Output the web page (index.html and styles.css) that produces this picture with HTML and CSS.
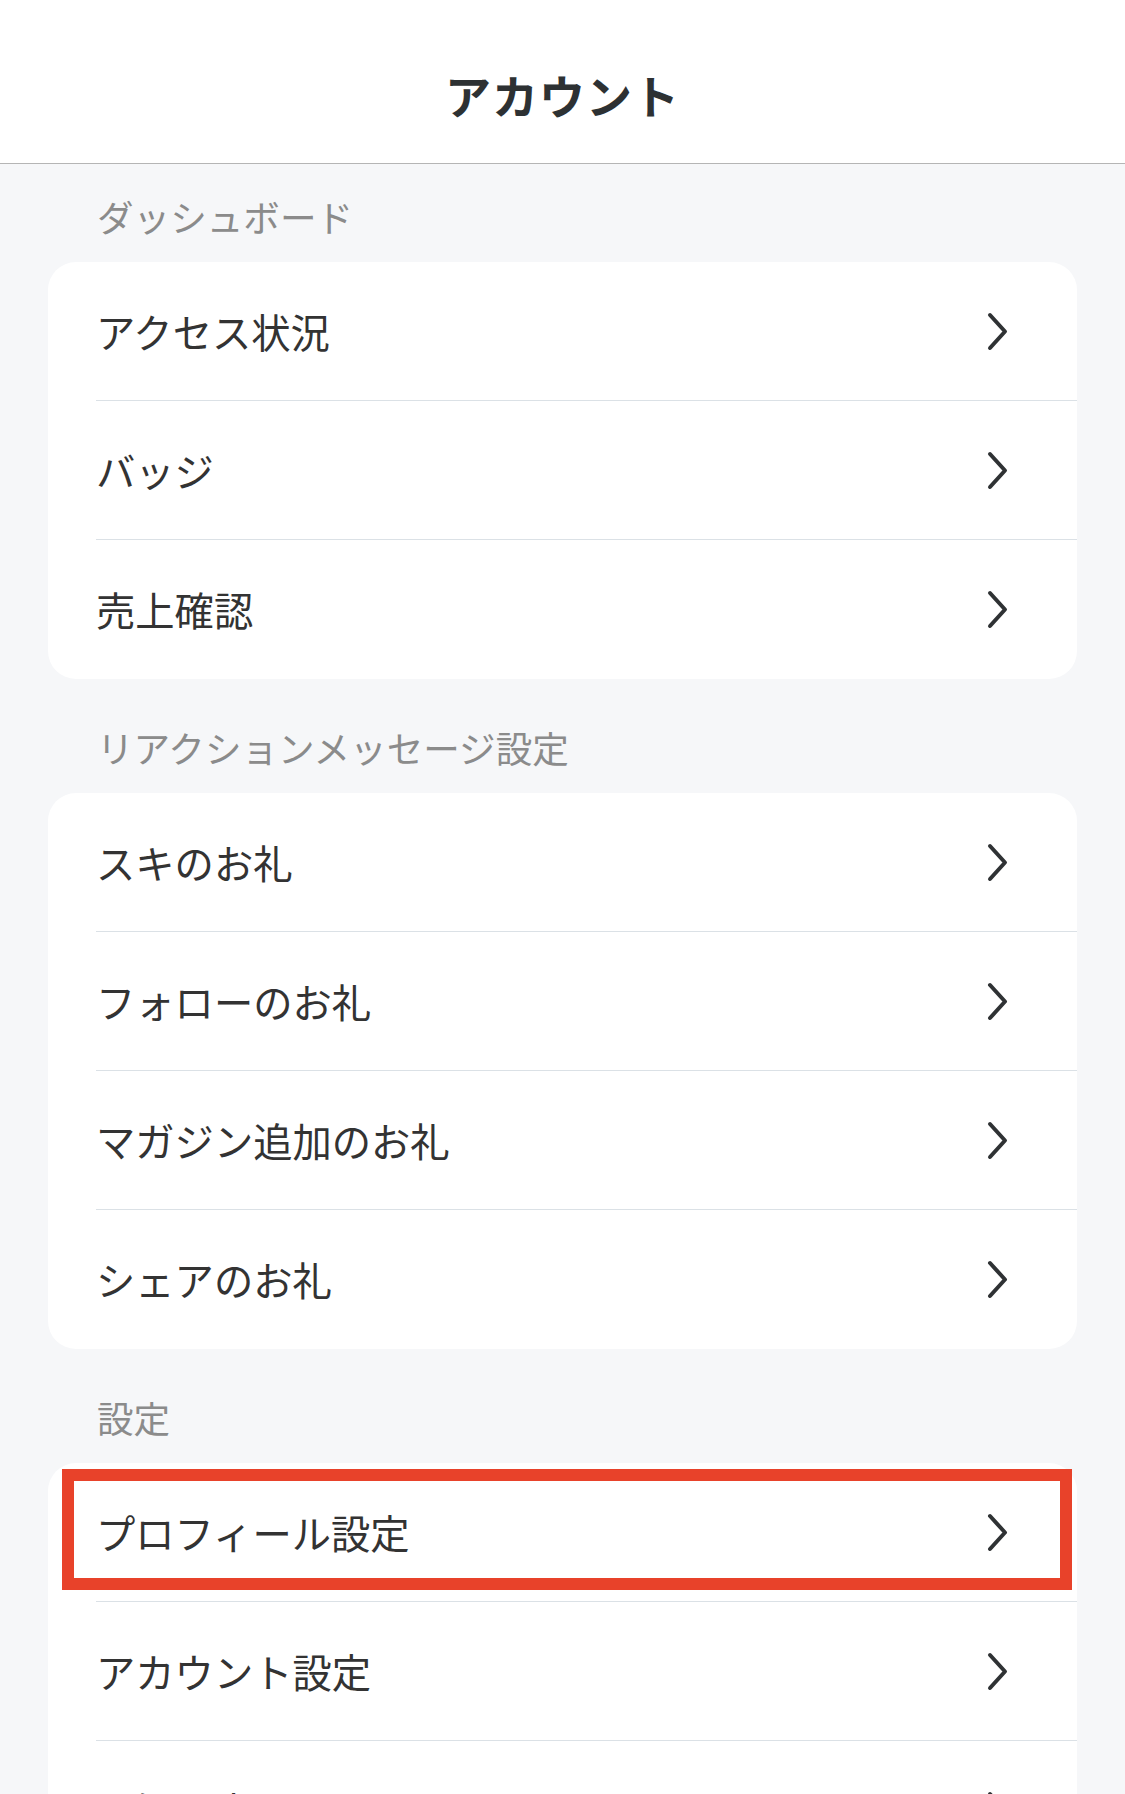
FILE: index.html
```html
<!DOCTYPE html>
<html lang="ja">

<head>
    <meta charset="UTF-8">
    <meta name="viewport" content="width=device-width, initial-scale=1.0">
    <title>アカウント</title>
    <link rel="stylesheet" href="styles.css">
</head>

<body>
    <header class="top-bar">
        <h1>アカウント</h1>
    </header>

    <main class="menu">
        <section class="menu-section">
            <h2 class="section-label">ダッシュボード</h2>
            <ul class="menu-card">
                <li class="menu-row"><a href="#"><span>アクセス状況</span><svg class="chevron" viewBox="0 0 21 39"><path d="M3 3 L18 19.5 L3 36"/></svg></a></li>
                <li class="menu-row"><a href="#"><span>バッジ</span><svg class="chevron" viewBox="0 0 21 39"><path d="M3 3 L18 19.5 L3 36"/></svg></a></li>
                <li class="menu-row"><a href="#"><span>売上確認</span><svg class="chevron" viewBox="0 0 21 39"><path d="M3 3 L18 19.5 L3 36"/></svg></a></li>
            </ul>
        </section>

        <section class="menu-section">
            <h2 class="section-label">リアクションメッセージ設定</h2>
            <ul class="menu-card">
                <li class="menu-row"><a href="#"><span>スキのお礼</span><svg class="chevron" viewBox="0 0 21 39"><path d="M3 3 L18 19.5 L3 36"/></svg></a></li>
                <li class="menu-row"><a href="#"><span>フォローのお礼</span><svg class="chevron" viewBox="0 0 21 39"><path d="M3 3 L18 19.5 L3 36"/></svg></a></li>
                <li class="menu-row"><a href="#"><span>マガジン追加のお礼</span><svg class="chevron" viewBox="0 0 21 39"><path d="M3 3 L18 19.5 L3 36"/></svg></a></li>
                <li class="menu-row"><a href="#"><span>シェアのお礼</span><svg class="chevron" viewBox="0 0 21 39"><path d="M3 3 L18 19.5 L3 36"/></svg></a></li>
            </ul>
        </section>

        <section class="menu-section">
            <h2 class="section-label">設定</h2>
            <ul class="menu-card">
                <li class="menu-row highlighted"><a href="#"><span>プロフィール設定</span><svg class="chevron" viewBox="0 0 21 39"><path d="M3 3 L18 19.5 L3 36"/></svg></a></li>
                <li class="menu-row"><a href="#"><span>アカウント設定</span><svg class="chevron" viewBox="0 0 21 39"><path d="M3 3 L18 19.5 L3 36"/></svg></a></li>
                <li class="menu-row"><a href="#"><span>通知設定</span><svg class="chevron" viewBox="0 0 21 39"><path d="M3 3 L18 19.5 L3 36"/></svg></a></li>
            </ul>
        </section>
    </main>
</body>

</html>
```

FILE: styles.css
```css
* {
    margin: 0;
    padding: 0;
    box-sizing: border-box;
}

body {
    font-family: "Noto Sans CJK JP", "Noto Sans", sans-serif;
    background: #f6f7f9;
    color: #333;
}

.top-bar {
    background: #fff;
    height: 164px;
    padding-top: 64px;
    border-bottom: 1px solid #b5b5b5;
    text-align: center;
}

.top-bar h1 {
    font-size: 46px;
    font-weight: bold;
    line-height: 60px;
    letter-spacing: 1px;
    color: #2d3133;
}

.menu {
    padding: 28px 48px 0;
}

.menu-section + .menu-section {
    margin-top: 44px;
}

.section-label {
    font-size: 36.6px;
    font-weight: normal;
    line-height: 50px;
    color: #8b8b8b;
    padding-left: 49px;
    margin-bottom: 20px;
}

.menu-card {
    list-style: none;
    background: #fff;
    border-radius: 28px;
}

.menu-row {
    position: relative;
    padding-left: 48px;
}

.menu-row a {
    display: flex;
    align-items: center;
    justify-content: space-between;
    height: 139px;
    padding-right: 69px;
    border-bottom: 1px solid #dbe1e6;
    color: #333;
    text-decoration: none;
    font-size: 39.3px;
    line-height: 1;
}

.menu-row:last-child a {
    border-bottom-color: transparent;
}

.chevron {
    width: 21px;
    height: 39px;
    fill: none;
    stroke: #2f3234;
    stroke-width: 4;
    stroke-linecap: round;
    stroke-linejoin: round;
}

/* annotation frame round the profile row */
.highlighted::after {
    content: "";
    position: absolute;
    top: 6px;
    left: 14px;
    right: 5px;
    bottom: 12px;
    border: 12px solid #e8422a;
    pointer-events: none;
}
```
